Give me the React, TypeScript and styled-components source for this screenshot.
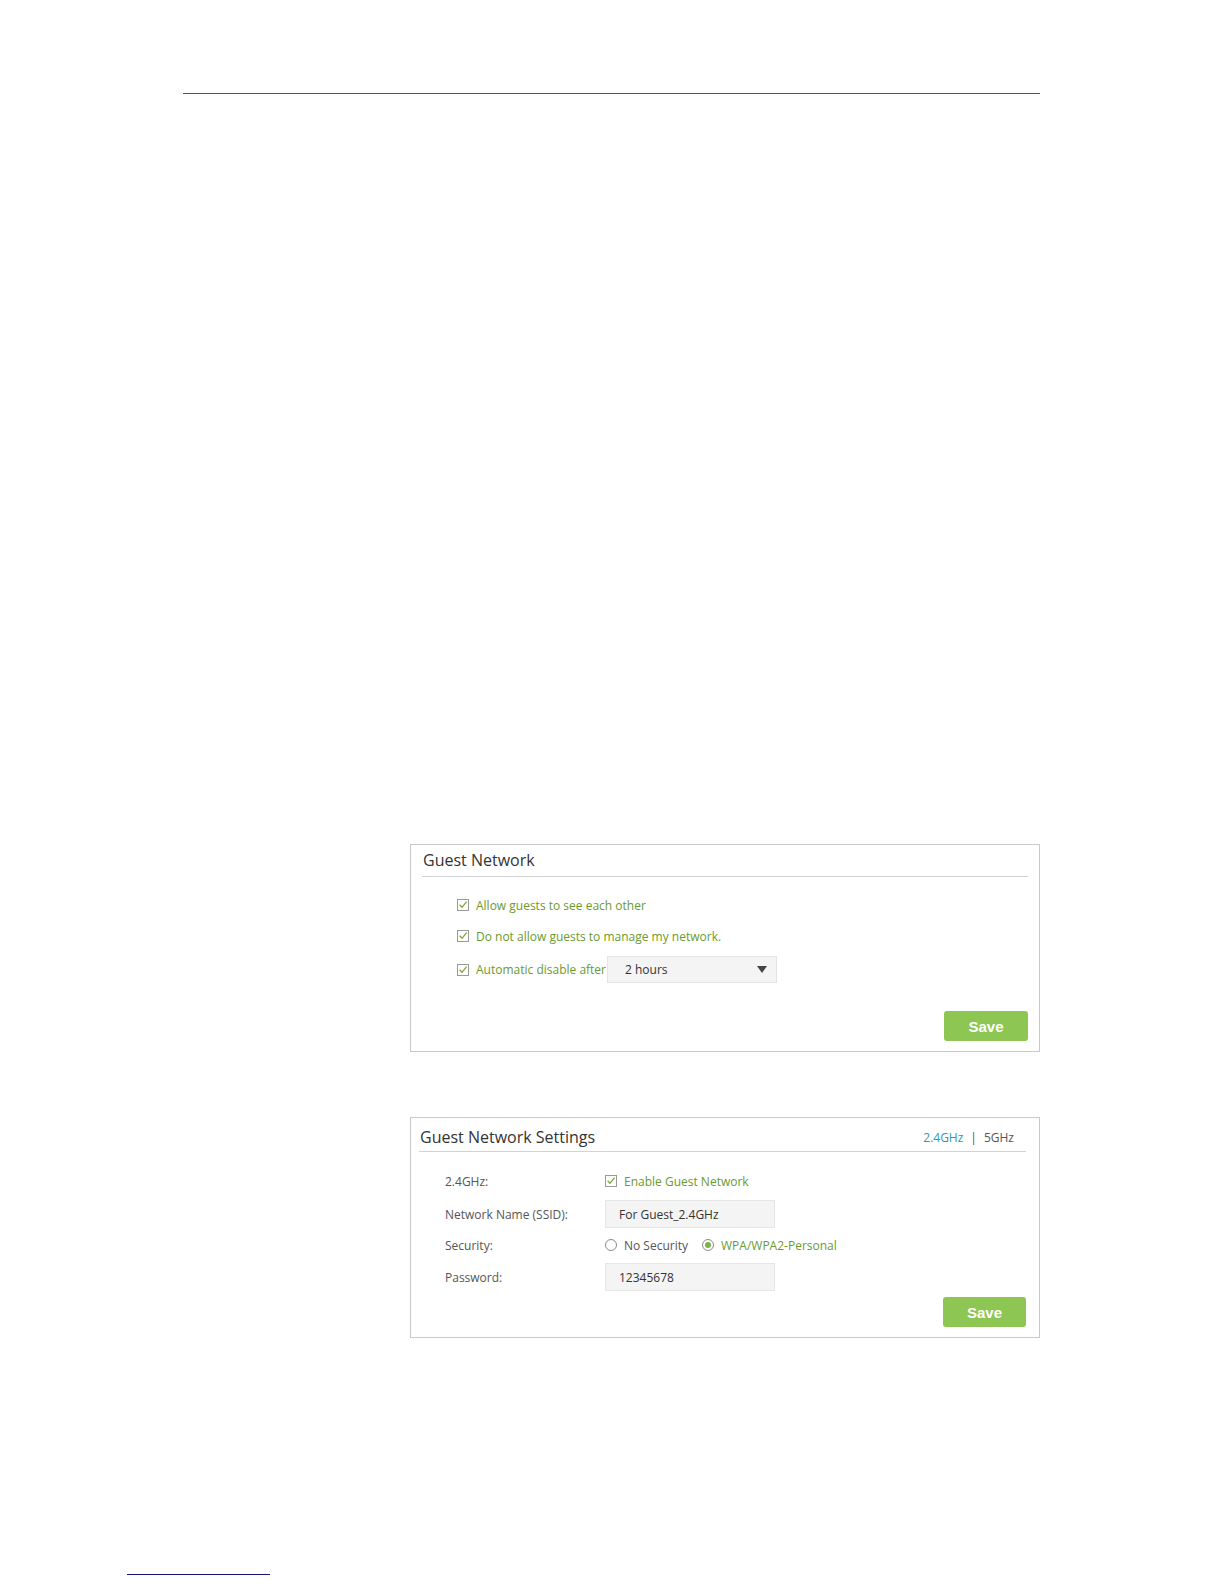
import React from 'react';
import styled, { createGlobalStyle } from 'styled-components';

const GlobalStyle = createGlobalStyle`
  html, body {
    margin: 0;
    padding: 0;
    background: #ffffff;
  }
  body {
    font-family: "Open Sans", "Noto Sans", sans-serif;
    color: #555;
  }
`;

const Page = styled.div`
  width: 1224px;
  height: 1584px;
  display: flex;
  flex-direction: column;
  overflow: hidden;
`;

const HeaderRule = styled.div`
  margin: 93px 0 0 183px;
  width: 857px;
  height: 1px;
  background: #555;
`;

const Figures = styled.div`
  margin: 750px 0 0 410px;
  display: flex;
  flex-direction: column;
  gap: 65px;
`;

const Panel = styled.section<{ $height: number }>`
  box-sizing: border-box;
  width: 630px;
  height: ${({ $height }) => $height}px;
  border: 1px solid #c9c9c9;
  display: flex;
  flex-direction: column;
`;

const PanelHeader = styled.div<{ $height: number; $top: number; $left: number; $right: number }>`
  box-sizing: border-box;
  height: ${({ $height }) => $height}px;
  margin: 0 ${({ $right }) => $right}px 0 ${({ $left }) => $left}px;
  padding-top: ${({ $top }) => $top}px;
  border-bottom: 1px solid #d3d3d3;
  display: flex;
  align-items: flex-start;
  justify-content: space-between;
`;

const PanelTitle = styled.h2`
  margin: 0 0 0 1px;
  font-size: 16px;
  line-height: 20px;
  font-weight: 400;
  color: #333;
`;

const BandTabs = styled.div`
  display: flex;
  align-items: center;
  gap: 7px;
  margin-top: 2px;
  padding-right: 12px;
  font-size: 12px;
  line-height: 18px;
  color: #555;
`;

const Tab = styled.span<{ $active?: boolean }>`
  color: ${({ $active }) => ($active ? '#2f97bd' : '#555')};
`;

const PanelBody = styled.div<{ $top: number }>`
  flex: 1;
  display: flex;
  flex-direction: column;
  padding-top: ${({ $top }) => $top}px;
`;

const OptionRow = styled.div<{ $gap: number }>`
  display: flex;
  align-items: center;
  min-height: 20px;
  margin-top: ${({ $gap }) => $gap}px;
  padding-left: 46px;
`;

const FieldRow = styled.div<{ $gap: number }>`
  display: grid;
  grid-template-columns: 160px 1fr;
  align-items: center;
  min-height: 20px;
  margin-top: ${({ $gap }) => $gap}px;
  padding-left: 34px;
`;

const FieldLabel = styled.span`
  font-size: 12px;
  color: #555;
`;

const Check = styled.label`
  display: inline-flex;
  align-items: center;
  gap: 7px;
  font-size: 12px;
  color: #6a9a2e;
`;

const Radios = styled.div`
  display: flex;
  align-items: center;
  gap: 14px;
`;

const Radio = styled.label<{ $checked?: boolean }>`
  display: inline-flex;
  align-items: center;
  gap: 7px;
  font-size: 12px;
  color: ${({ $checked }) => ($checked ? '#6a9a2e' : '#555')};
`;

const RadioDot = styled.span<{ $checked?: boolean }>`
  box-sizing: border-box;
  width: 12px;
  height: 12px;
  border-radius: 50%;
  border: 1px solid #8a8a8a;
  display: inline-flex;
  align-items: center;
  justify-content: center;

  &::after {
    content: '';
    width: 6px;
    height: 6px;
    border-radius: 50%;
    background: ${({ $checked }) => ($checked ? '#7cb342' : 'transparent')};
  }
`;

const Dropdown = styled.div`
  box-sizing: border-box;
  margin-left: 1px;
  width: 170px;
  height: 27px;
  padding: 0 9px 0 17px;
  background: #f4f4f4;
  border: 1px solid #e4e4e4;
  display: flex;
  align-items: center;
  justify-content: space-between;
  font-size: 12px;
  color: #333;
`;

const Caret = styled.span`
  width: 0;
  height: 0;
  border-left: 5px solid transparent;
  border-right: 5px solid transparent;
  border-top: 7px solid #444;
`;

const TextBox = styled.div`
  box-sizing: border-box;
  width: 170px;
  height: 28px;
  padding: 0 13px;
  background: #f4f4f4;
  border: 1px solid #e6e6e6;
  display: flex;
  align-items: center;
  font-size: 12px;
  color: #333;
`;

const Actions = styled.div<{ $gap: number; $right: number }>`
  display: flex;
  justify-content: flex-end;
  margin-top: ${({ $gap }) => $gap}px;
  padding-right: ${({ $right }) => $right}px;
`;

const SaveButton = styled.button<{ $width: number }>`
  width: ${({ $width }) => $width}px;
  height: 30px;
  border: none;
  border-radius: 3px;
  background: #8dc653;
  color: #fff;
  font-family: "Liberation Sans", Arial, sans-serif;
  font-weight: 700;
  font-size: 15px;
  cursor: pointer;
`;

const FootRule = styled.div`
  margin: 236px 0 0 127px;
  width: 143px;
  height: 1px;
  background: #15157a;
`;

const CheckIcon = () => (
  <svg width="12" height="12" viewBox="0 0 12 12">
    <rect x="0.5" y="0.5" width="11" height="11" fill="#fff" stroke="#9a9a9a" />
    <path d="M2.6 5.8 L5 8.3 L9.6 2.6" fill="none" stroke="#7aa83c" strokeWidth="1.3" />
  </svg>
);

const App: React.FC = () => (
  <Page>
    <GlobalStyle />
    <HeaderRule />
    <Figures>
      <Panel $height={208}>
        <PanelHeader $height={32} $top={5} $left={11} $right={11}>
          <PanelTitle>Guest Network</PanelTitle>
        </PanelHeader>
        <PanelBody $top={18}>
          <OptionRow $gap={0}>
            <Check><CheckIcon />Allow guests to see each other</Check>
          </OptionRow>
          <OptionRow $gap={11}>
            <Check><CheckIcon />Do not allow guests to manage my network.</Check>
          </OptionRow>
          <OptionRow $gap={10}>
            <Check><CheckIcon />Automatic disable after</Check>
            <Dropdown>
              2 hours
              <Caret />
            </Dropdown>
          </OptionRow>
          <Actions $gap={28} $right={11}>
            <SaveButton $width={84}>Save</SaveButton>
          </Actions>
        </PanelBody>
      </Panel>

      <Panel $height={221}>
        <PanelHeader $height={34} $top={9} $left={8} $right={13}>
          <PanelTitle>Guest Network Settings</PanelTitle>
          <BandTabs>
            <Tab $active>2.4GHz</Tab>
            <span>|</span>
            <Tab>5GHz</Tab>
          </BandTabs>
        </PanelHeader>
        <PanelBody $top={19}>
          <FieldRow $gap={0}>
            <FieldLabel>2.4GHz:</FieldLabel>
            <Check><CheckIcon />Enable Guest Network</Check>
          </FieldRow>
          <FieldRow $gap={9}>
            <FieldLabel>Network Name (SSID):</FieldLabel>
            <TextBox>For Guest_2.4GHz</TextBox>
          </FieldRow>
          <FieldRow $gap={7}>
            <FieldLabel>Security:</FieldLabel>
            <Radios>
              <Radio><RadioDot />No Security</Radio>
              <Radio $checked><RadioDot $checked />WPA/WPA2-Personal</Radio>
            </Radios>
          </FieldRow>
          <FieldRow $gap={8}>
            <FieldLabel>Password:</FieldLabel>
            <TextBox>12345678</TextBox>
          </FieldRow>
          <Actions $gap={6} $right={13}>
            <SaveButton $width={83}>Save</SaveButton>
          </Actions>
        </PanelBody>
      </Panel>
    </Figures>
    <FootRule />
  </Page>
);

export default App;
